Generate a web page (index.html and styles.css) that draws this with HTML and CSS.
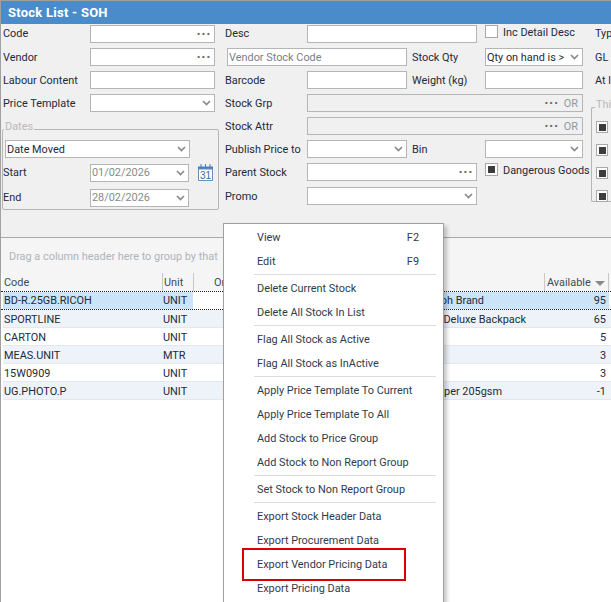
FILE: index.html
```html
<!DOCTYPE html>
<html lang="en">
<head>
<meta charset="utf-8">
<title>Stock List - SOH</title>
<link rel="stylesheet" href="styles.css">
</head>
<body>
<div class="window">
  <header class="titlebar">Stock List - SOH</header>
  <form class="filters">
    <label class="lbl c-code r1">Code</label>
    <div class="field c-codeinput r1"><span class="dots">···</span></div>
    <label class="lbl c-desc r1">Desc</label>
    <div class="field c-mid-long r1"></div>
    <div class="check c-right r1"><span class="box"></span><span class="check-text">Inc Detail Desc</span></div>
    <label class="lbl c-far r1">Typ</label>

    <label class="lbl c-code r2">Vendor</label>
    <div class="field c-codeinput r2"><span class="dots">···</span></div>
    <div class="field c-vendorcode r2"><span class="placeholder">Vendor Stock Code</span></div>
    <label class="lbl c-lbl3 r2">Stock Qty</label>
    <div class="field c-right r2"><span class="value">Qty on hand is &gt;</span><svg class="chev" viewBox="0 0 9 6"><path d="M1 1l3.5 3.5L8 1"/></svg></div>
    <label class="lbl c-far r2">GL</label>

    <label class="lbl c-code r3">Labour Content</label>
    <div class="field c-codeinput r3"></div>
    <label class="lbl c-desc r3">Barcode</label>
    <div class="field c-mid-short r3"></div>
    <label class="lbl c-lbl3 r3">Weight (kg)</label>
    <div class="field c-right r3"></div>
    <label class="lbl c-far r3">At l</label>

    <label class="lbl c-code r4">Price Template</label>
    <div class="field c-codeinput r4"><svg class="chev" viewBox="0 0 9 6"><path d="M1 1l3.5 3.5L8 1"/></svg></div>
    <label class="lbl c-desc r4">Stock Grp</label>
    <div class="field field-off c-mid-full r4"><span class="dots">···</span><span class="or">OR</span></div>

    <fieldset class="dates">
      <legend>Dates</legend>
      <div class="field date-type"><span class="value">Date Moved</span><svg class="chev" viewBox="0 0 9 6"><path d="M1 1l3.5 3.5L8 1"/></svg></div>
      <div class="date-row">
        <label class="lbl date-lbl">Start</label>
        <div class="field date-input"><span class="value muted">01/02/2026</span><svg class="chev" viewBox="0 0 9 6"><path d="M1 1l3.5 3.5L8 1"/></svg></div>
        <svg class="cal" viewBox="0 0 17 17">
          <path class="cal-top" d="M1 2.500h15v3H1z"/>
          <path class="cal-rings" d="M4 0v3M8.500 0v3M13 0v3"/>
          <path class="cal-body" d="M1.500 5h14v11.500h-14z"/>
          <text x="8.500" y="14.500" class="cal-num">31</text>
        </svg>
      </div>
      <div class="date-row">
        <label class="lbl date-lbl">End</label>
        <div class="field date-input"><span class="value muted">28/02/2026</span><svg class="chev" viewBox="0 0 9 6"><path d="M1 1l3.5 3.5L8 1"/></svg></div>
      </div>
    </fieldset>

    <label class="lbl c-desc r5">Stock Attr</label>
    <div class="field field-off c-mid-full r5"><span class="dots">···</span><span class="or">OR</span></div>

    <label class="lbl c-desc r6">Publish Price to</label>
    <div class="field c-mid-short r6"><svg class="chev" viewBox="0 0 9 6"><path d="M1 1l3.5 3.5L8 1"/></svg></div>
    <label class="lbl c-lbl3 r6">Bin</label>
    <div class="field c-right r6"><svg class="chev" viewBox="0 0 9 6"><path d="M1 1l3.5 3.5L8 1"/></svg></div>

    <label class="lbl c-desc r7">Parent Stock</label>
    <div class="field c-mid-long r7"><span class="dots">···</span></div>
    <div class="check c-right-wide r7"><span class="box box-mixed"></span><span class="check-text">Dangerous Goods</span></div>

    <label class="lbl c-desc r8">Promo</label>
    <div class="field c-mid-long r8"><svg class="chev" viewBox="0 0 9 6"><path d="M1 1l3.5 3.5L8 1"/></svg></div>

    <fieldset class="third">
      <legend>Thi</legend>
      <span class="box box-mixed"></span>
      <span class="box box-mixed"></span>
      <span class="box box-mixed"></span>
      <span class="box box-mixed"></span>
    </fieldset>
  </form>

  <section class="grid-panel">
    <div class="group-hint">Drag a column header here to group by that</div>
    <div class="row head">
      <div class="cell code">Code</div>
      <div class="cell unit">Unit</div>
      <div class="cell order">Or</div>
      <div class="cell desc"></div>
      <div class="cell avail">Available<svg class="sort" viewBox="0 0 10 5"><path d="M0 0h10L5 5z"/></svg></div>
    </div>
    <div class="row selected">
      <div class="cell code">BD-R.25GB.RICOH</div>
      <div class="cell unit">UNIT</div>
      <div class="cell order"></div>
      <div class="cell desc d-a">Ricoh Brand</div>
      <div class="cell avail num">95</div>
    </div>
    <div class="row alt">
      <div class="cell code">SPORTLINE</div>
      <div class="cell unit">UNIT</div>
      <div class="cell order"></div>
      <div class="cell desc d-b">Deluxe Backpack</div>
      <div class="cell avail num">65</div>
    </div>
    <div class="row">
      <div class="cell code">CARTON</div>
      <div class="cell unit">UNIT</div>
      <div class="cell order"></div>
      <div class="cell desc"></div>
      <div class="cell avail num">5</div>
    </div>
    <div class="row alt">
      <div class="cell code">MEAS.UNIT</div>
      <div class="cell unit">MTR</div>
      <div class="cell order"></div>
      <div class="cell desc"></div>
      <div class="cell avail num">3</div>
    </div>
    <div class="row">
      <div class="cell code">15W0909</div>
      <div class="cell unit">UNIT</div>
      <div class="cell order"></div>
      <div class="cell desc"></div>
      <div class="cell avail num">3</div>
    </div>
    <div class="row alt">
      <div class="cell code">UG.PHOTO.P</div>
      <div class="cell unit">UNIT</div>
      <div class="cell order"></div>
      <div class="cell desc d-c">Paper 205gsm</div>
      <div class="cell avail num">-1</div>
    </div>
  </section>

  <nav class="menu">
    <div class="item"><span>View</span><span class="key">F2</span></div>
    <div class="item"><span>Edit</span><span class="key">F9</span></div>
    <hr>
    <div class="item">Delete Current Stock</div>
    <div class="item">Delete All Stock In List</div>
    <hr>
    <div class="item">Flag All Stock as Active</div>
    <div class="item">Flag All Stock as InActive</div>
    <hr>
    <div class="item">Apply Price Template To Current</div>
    <div class="item">Apply Price Template To All</div>
    <div class="item">Add Stock to Price Group</div>
    <div class="item">Add Stock to Non Report Group</div>
    <hr>
    <div class="item">Set Stock to Non Report Group</div>
    <hr>
    <div class="item">Export Stock Header Data</div>
    <div class="item">Export Procurement Data</div>
    <div class="item highlighted">Export Vendor Pricing Data</div>
    <div class="item">Export Pricing Data</div>
  </nav>
</div>
</body>
</html>
```

FILE: styles.css
```css
* { box-sizing: border-box; }
html, body { margin: 0; height: 100%; overflow: hidden; }
body {
  font-family: Roboto, "Liberation Sans", sans-serif;
  font-size: 10.9px;
  color: #1e2a3a;
  background: #fff;
}
.window {
  position: relative;
  width: 611px;
  height: 602px;
  overflow: hidden;
  border-top: 1px solid #a0a0a0;
  border-left: 1px solid #a0a0a0;
}
.titlebar {
  height: 23px;
  padding: 0 7px;
  line-height: 23px;
  font-size: 13px;
  font-weight: 700;
  letter-spacing: .25px;
  color: #fff;
  background: #4a8bc9;
}

/* Filter form */
.filters {
  display: grid;
  grid-template-columns: 2px 87px 125px 10px 82px 100px 5px 65px 8px 98px 12px 30px;
  grid-template-rows: repeat(8, 23px);
  align-items: start;
  height: 214px;
  padding-top: 1px;
  background: #f0f0f0;
  border-bottom: 1px solid #a8a8a8;
}
.r1 { grid-row: 1; } .r2 { grid-row: 2; } .r3 { grid-row: 3; } .r4 { grid-row: 4; }
.r5 { grid-row: 5; } .r6 { grid-row: 6; } .r7 { grid-row: 7; } .r8 { grid-row: 8; margin-top: 1px; }
.c-code { grid-column: 2; }
.c-codeinput { grid-column: 3; }
.c-desc { grid-column: 4 / 6; padding-left: 10px; }
.c-mid-long { grid-column: 6 / 9; }
.c-mid-short { grid-column: 6; }
.c-mid-full { grid-column: 6 / 11; }
.c-vendorcode { grid-column: 4 / 7; margin-left: 12px; }
.c-lbl3 { grid-column: 7 / 10; padding-left: 5px; }
.c-right { grid-column: 10; }
.c-right-wide { grid-column: 10 / 12; }
.c-far { grid-column: 12; white-space: nowrap; overflow: hidden; }

.lbl { height: 19px; padding-top: 1px; line-height: 18px; white-space: nowrap; }
.r1.lbl { height: 18px; padding-top: 0; line-height: 17px; }
.field {
  display: flex;
  align-items: center;
  height: 18px;
  min-width: 0;
  padding: 0 3px 0 1px;
  background: #fff;
  border: 1px solid #b5b5b5;
}
.field-off { background: #f0f0f0; }
.value { flex: 1; white-space: nowrap; }
.muted { color: #8a8a8a; }
.placeholder { color: #77808c; white-space: nowrap; }
.dots {
  margin-left: auto;
  font-weight: 700;
  font-size: 14px;
  line-height: 10px;
  letter-spacing: .6px;
  color: #6a6a6a;
}
.or { margin-left: 5px; margin-right: 1px; color: #8e98a2; }
.chev { flex: none; width: 9px; height: 6px; margin-left: auto; }
.chev path { fill: none; stroke: #8a8a8a; stroke-width: 1.7; }

.check { display: flex; align-items: flex-start; white-space: nowrap; }
.check-text { margin-left: 5px; line-height: 15px; }
.box {
  display: flex;
  align-items: center;
  justify-content: center;
  flex: none;
  width: 13px;
  height: 13px;
  background: #fff;
  border: 1px solid #a9a9a9;
}
.box-mixed::after { content: ""; width: 7px; height: 7px; background: #3c3c3c; }

.dates {
  grid-column: 1 / 4;
  grid-row: 5 / 9;
  align-self: start;
  margin: 12px 0 0 1px;
  padding: 0 0 0 2px;
  height: 81px;
  width: 217px;
  min-width: 0;
  border: 1px solid #b5b5b5;
  border-radius: 2px;
  position: relative;
}
.dates legend, .third legend {
  position: absolute;
  top: -10px;
  left: 1px;
  padding: 0 1px;
  height: 13px;
  line-height: 13px;
  color: #b8b8b8;
  background: #f0f0f0;
}
.date-type { width: 185px; margin-top: 10px; }
.date-row { display: flex; align-items: center; margin-top: 5px; }
.date-row + .date-row { margin-top: 6px; }
.date-lbl { width: 87px; margin-left: -2px; }
.date-input { width: 99px; }
.cal { width: 17px; height: 17px; margin-left: 8px; }
.cal-top { fill: #4a7fb5; }
.cal-rings { stroke: #4a7fb5; fill: none; stroke-width: 1; }
.cal-body { fill: #fff; stroke: #6a8fb5; stroke-width: 1; }
.cal-num { font-size: 10px; fill: #2f6aa8; text-anchor: middle; font-family: "Liberation Sans", sans-serif; }

.third {
  grid-column: 11 / 13;
  grid-row: 4 / 9;
  align-self: start;
  position: relative;
  margin: 13px 0 0 8px;
  padding: 13px 0 0 4px;
  height: 95px;
  width: 40px;
  min-width: 0;
  display: flex;
  flex-direction: column;
  gap: 11px;
  border: 1px solid #b5b5b5;
  border-right: 0;
  border-radius: 2px;
}
.third legend { left: 3px; }
.third .box { width: 12px; height: 12px; }

/* Results grid */
.grid-panel { background: #fff; }
.group-hint {
  height: 35px;
  padding: 12px 0 0 8px;
  color: #aeb4bb;
  background: #f5f5f5;
  white-space: nowrap;
}
.row {
  display: grid;
  grid-template-columns: 159px 31px 30px 321px 65px;
  height: 18px;
  margin-left: 2px;
  border-bottom: 1px solid #e4e8ec;
}
.row .cell { padding: 1px 1px 0; line-height: 17px; white-space: nowrap; overflow: hidden; }
.row.head { background: #f5f5f5; border-bottom: 0; color: #3f4a58; }
.row.head .cell { padding-top: 2px; line-height: 16px; }
.head .unit, .head .avail { border-left: 1px solid #c8c8c8; }
.row.head .order { padding-left: 20px; border-left: 1px solid #c8c8c8; overflow: visible; }
.row.head .avail { display: flex; align-items: center; padding-left: 2px; border-right: 1px solid #c8c8c8; }
.sort { width: 10px; height: 5px; margin-left: 4px; flex: none; }
.sort path { fill: #8a8a8a; }
.alt { background: #eef3f9; }
.row.selected { height: 19px; border-top: 1px dotted #222; border-bottom: 1px dotted #222; margin-left: 0; padding-left: 2px; }
.selected .code, .selected .unit, .selected .desc, .selected .avail { background: #cce4f7; }
.row.selected .cell { padding-top: 0; }
.row .num { text-align: right; padding-right: 3px; }
.row .desc { text-align: right; }
.row .d-a { padding-right: 60px; }
.row .d-b { padding-right: 18px; }
.row .d-c { padding-right: 42px; }

/* Context menu */
.menu {
  position: absolute;
  left: 222px;
  top: 222px;
  width: 221px;
  height: 400px;
  padding: 1px 7px 0 1px;
  color: #2f3b4c;
  background: #fff;
  border: 1px solid #a0a0a0;
  box-shadow: 3px 3px 4px rgba(0,0,0,.22);
}
.item {
  position: relative;
  display: flex;
  justify-content: space-between;
  align-items: center;
  height: 24px;
  padding: 0 17px 0 32px;
  white-space: nowrap;
}
.menu hr { height: 1px; margin: 1px 0 1px 29px; border: 0; background: #dcdcdc; }
.highlighted::after {
  content: "";
  position: absolute;
  left: 17px;
  top: -4px;
  width: 160px;
  height: 29px;
  border: 2px solid #d90000;
}
```
